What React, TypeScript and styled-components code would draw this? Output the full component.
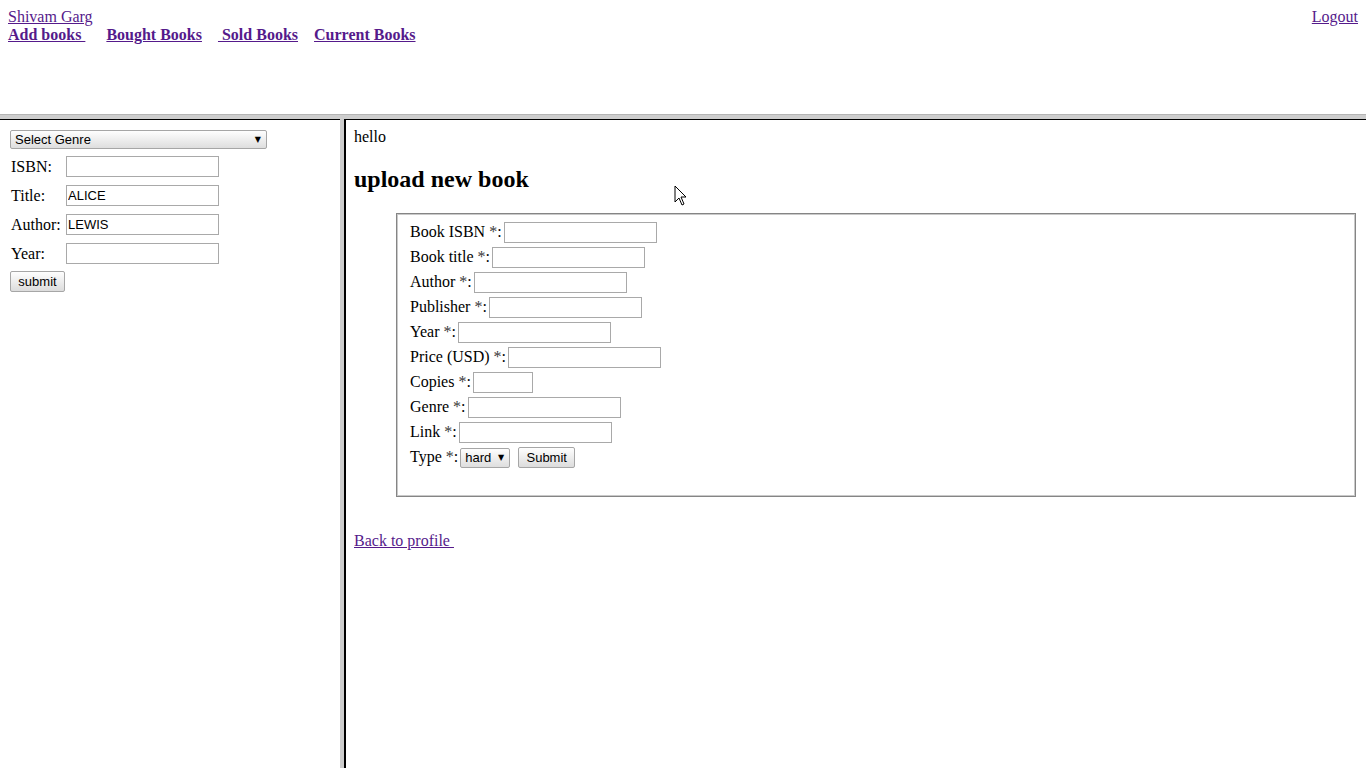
import styled, { createGlobalStyle } from "styled-components";

const GlobalStyle = createGlobalStyle`
  html, body {
    margin: 0;
    padding: 0;
    height: 100%;
  }
  body {
    font-family: "Liberation Serif", "Times New Roman", serif;
    font-size: 16px;
    color: #000;
    background: #fff;
  }
`;

const Frameset = styled.div`
  position: relative;
  display: grid;
  grid-template-rows: 114px 5px 1fr;
  height: 100vh;
  overflow: hidden;
`;

const TopFrame = styled.div`
  padding: 8px;
`;

const TopRow = styled.div`
  display: flex;
  justify-content: space-between;
`;

const Link = styled.a<{ bold?: boolean }>`
  color: #551a8b;
  text-decoration: underline;
  font-weight: ${p => (p.bold ? "bold" : "normal")};
  white-space: pre;
  cursor: pointer;
`;

const NavRow = styled.div`
  display: flex;
`;

const Spacer = styled.span<{ w: number }>`
  display: inline-block;
  width: ${p => p.w}px;
`;

const HSplit = styled.div`
  background: #cdcdcd;
  border-top: 1px solid #b4b4b4;
`;

const Bottom = styled.div`
  display: grid;
  grid-template-columns: 340px 4px 1fr;
  min-height: 0;
`;

const LeftFrame = styled.div`
  border-top: 1px solid #000;
  padding: 8px;
`;

const VSplit = styled.div`
  background: #cdcdcd;
`;

const RightFrame = styled.div`
  border-top: 1px solid #000;
  border-left: 2px solid #000;
  padding: 8px;
`;

const SelectWrap = styled.div<{ w: number; h: number }>`
  position: relative;
  display: block;
  flex: none;
  width: ${p => p.w}px;
  height: ${p => p.h}px;
`;

const Select = styled.select`
  appearance: none;
  -webkit-appearance: none;
  box-sizing: border-box;
  display: block;
  width: 100%;
  height: 100%;
  margin: 0;
  padding: 0 0 0 4px;
  font-family: "Liberation Sans", Arial, sans-serif;
  font-size: 13px;
  color: #000;
  border: 1px solid #a6a6a6;
  border-radius: 2px;
  background: linear-gradient(#fefefe, #dedede);
`;

const Arrow = styled.span`
  position: absolute;
  right: 6px;
  top: 50%;
  transform: translateY(-52%);
  font-size: 8px;
  line-height: 1;
  color: #000;
  pointer-events: none;
  font-family: "DejaVu Sans", sans-serif;
`;

const GenreBox = styled.div`
  display: flex;
  margin: 2px;
`;

const SearchGrid = styled.div`
  display: grid;
  grid-template-columns: 58px auto;
  grid-auto-rows: 21px;
  row-gap: 8px;
  margin-top: 7px;
  justify-content: start;
`;

const SearchLabel = styled.span`
  padding-left: 3px;
  display: flex;
  align-items: center;
`;

const TextInput = styled.input<{ w?: number }>`
  box-sizing: border-box;
  display: block;
  width: ${p => p.w ?? 153}px;
  height: 21px;
  margin: 0;
  padding: 1px;
  font-family: "Liberation Sans", Arial, sans-serif;
  font-size: 13px;
  color: #000;
  border: 1px solid #a9a9a9;
  border-radius: 0;
  outline: none;
  background: #fff;
`;

const Button = styled.button<{ w: number; h: number }>`
  box-sizing: border-box;
  display: block;
  width: ${p => p.w}px;
  height: ${p => p.h}px;
  margin: 0;
  padding: 0;
  font-family: "Liberation Sans", Arial, sans-serif;
  font-size: 13px;
  color: #000;
  border: 1px solid #a6a6a6;
  border-radius: 2px;
  background: linear-gradient(#fefefe, #dcdcdc);
`;

const LeftSubmit = styled.div`
  margin: 7px 2px 0;
`;

const Hello = styled.div`
  line-height: 18px;
`;

const Heading = styled.h2`
  font-size: 24px;
  font-weight: bold;
  margin: 19px 0 20px;
  line-height: 28px;
`;

const Fieldset = styled.div`
  margin: 0 2px 0 42px;
  border: 1px solid #858585;
  box-shadow: inset 0 0 0 1px #c9c9c9;
  padding: 6px 12px 26px 13px;
`;

const FormRow = styled.div`
  display: flex;
  align-items: center;
  height: 25px;
`;

const FieldLabel = styled.span`
  white-space: pre;
  padding-bottom: 2px;
`;

const Required = styled.span`
  color: #3a3a3a;
`;

const InputGap = styled.span`
  margin-left: 2px;
  display: inline-flex;
  align-items: center;
`;

const BackLink = styled.div`
  margin-top: 35px;
`;

const Cursor = styled.svg`
  position: absolute;
  left: 674px;
  top: 185px;
`;

const fields: { label: string; w?: number }[] = [
  { label: "Book ISBN" },
  { label: "Book title" },
  { label: "Author" },
  { label: "Publisher" },
  { label: "Year" },
  { label: "Price (USD)" },
  { label: "Copies", w: 60 },
  { label: "Genre" },
  { label: "Link" },
];

const searchFields = [
  { label: "ISBN:", value: "" },
  { label: "Title:", value: "ALICE" },
  { label: "Author:", value: "LEWIS" },
  { label: "Year:", value: "" },
];

export default function App() {
  return (
    <>
      <GlobalStyle />
      <Frameset>
        <TopFrame>
          <TopRow>
            <Link>Shivam Garg</Link>
            <Link>Logout</Link>
          </TopRow>
          <NavRow>
            <Link bold>{"Add books "}</Link>
            <Spacer w={21} />
            <Link bold>Bought Books</Link>
            <Spacer w={16} />
            <Link bold>{" Sold Books"}</Link>
            <Spacer w={16} />
            <Link bold>Current Books</Link>
          </NavRow>
        </TopFrame>
        <HSplit />
        <Bottom>
          <LeftFrame>
            <GenreBox>
              <SelectWrap w={257} h={19}>
                <Select defaultValue="">
                  <option value="">Select Genre</option>
                </Select>
                <Arrow>▼</Arrow>
              </SelectWrap>
            </GenreBox>
            <SearchGrid>
              {searchFields.flatMap(f => [
                <SearchLabel key={f.label}>{f.label}</SearchLabel>,
                <TextInput key={f.label + "-in"} defaultValue={f.value} />,
              ])}
            </SearchGrid>
            <LeftSubmit>
              <Button w={55} h={21}>submit</Button>
            </LeftSubmit>
          </LeftFrame>
          <VSplit />
          <RightFrame>
            <Hello>hello</Hello>
            <Heading>upload new book</Heading>
            <Fieldset>
              {fields.map(f => (
                <FormRow key={f.label}>
                  <FieldLabel>
                    {f.label + " "}
                    <Required>*</Required>:
                  </FieldLabel>
                  <InputGap>
                    <TextInput w={f.w} />
                  </InputGap>
                </FormRow>
              ))}
              <FormRow>
                <FieldLabel>
                  {"Type "}
                  <Required>*</Required>:
                </FieldLabel>
                <InputGap>
                  <SelectWrap w={50} h={20}>
                    <Select defaultValue="hard">
                      <option value="hard">hard</option>
                      <option value="soft">soft</option>
                    </Select>
                    <Arrow>▼</Arrow>
                  </SelectWrap>
                </InputGap>
                <Spacer w={8} />
                <Button w={57} h={21}>Submit</Button>
              </FormRow>
            </Fieldset>
            <BackLink>
              <Link>{"Back to profile "}</Link>
            </BackLink>
          </RightFrame>
        </Bottom>
        <Cursor width="14" height="22" viewBox="0 0 14 22">
          <path
            d="M1 1 L1 17 L5 13 L8 20 L10 19 L7 12 L12 12 Z"
            fill="#fff"
            stroke="#000"
            strokeWidth="1"
            strokeLinejoin="miter"
          />
        </Cursor>
      </Frameset>
    </>
  );
}
